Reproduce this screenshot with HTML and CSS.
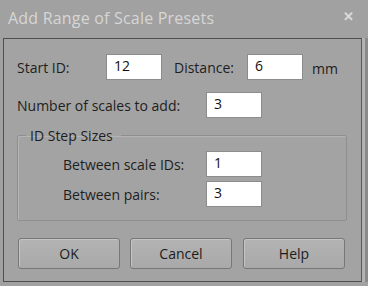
FILE: index.html
```html
<!DOCTYPE html>
<html lang="en">
<head>
    <meta charset="UTF-8">
    <title>Add Range of Scale Presets</title>
    <link rel="stylesheet" href="styles.css">
</head>
<body>
    <div class="dialog">
        <!-- title bar -->
        <div class="titlebar">
            <span class="title">Add Range of Scale Presets</span>
            <span class="close">&#x2715;</span>
        </div>

        <div class="frame">
            <div class="panel">
                <div class="row">
                    <label class="lbl lbl-start">Start ID:</label>
                    <input class="field" type="text" value="12">
                    <label class="lbl lbl-dist">Distance:</label>
                    <input class="field" type="text" value="6">
                    <span class="unit">mm</span>
                </div>

                <div class="row row-count">
                    <label class="lbl lbl-count">Number of scales to add:</label>
                    <input class="field" type="text" value="3">
                </div>

                <!-- step sizes group -->
                <fieldset class="group">
                    <legend class="legend">ID Step Sizes</legend>
                    <div class="row row-step">
                        <label class="lbl lbl-step">Between scale IDs:</label>
                        <input class="field" type="text" value="1">
                    </div>
                    <div class="row row-step row-pairs">
                        <label class="lbl lbl-step">Between pairs:</label>
                        <input class="field" type="text" value="3">
                    </div>
                </fieldset>

                <div class="buttons">
                    <button class="btn">OK</button>
                    <button class="btn">Cancel</button>
                    <button class="btn">Help</button>
                </div>
            </div>
            <div class="edge"></div>
        </div>
    </div>
</body>
</html>
```

FILE: styles.css
```css
* {
    margin: 0;
    padding: 0;
    box-sizing: border-box;
}

body {
    width: 368px;
    height: 286px;
    overflow: hidden;
    background: #a1a1a1;
    font-family: "Open Sans", "Noto Sans", sans-serif;
    color: #1c1c1c;
}

.dialog {
    width: 368px;
    height: 286px;
    display: flex;
    flex-direction: column;
    background: #a1a1a1;
}

/* 标题栏 */
.titlebar {
    height: 38px;
    display: flex;
    align-items: center;
    justify-content: space-between;
    padding: 0 14px 2px 8px;
}

.title {
    font-size: 16px;
    color: #d6d6d6;
    letter-spacing: 0.2px;
}

.close {
    font-size: 13px;
    font-weight: 700;
    color: #dcdcdc;
    margin-top: -4px;
}

.frame {
    display: flex;
    height: 244px;
    padding-left: 3px;
}

.edge {
    width: 6px;
    border-left: 3px solid #b2b2b2;
    background: #8a8a8a;
}

.panel {
    width: 359px;
    border: 1px solid #4e4e4e;
    border-right-color: #5a5a5a;
    padding: 15px 13px 0 13px;
    background: #a3a3a3;
}

.row {
    display: flex;
    align-items: center;
    height: 26px;
}

.row-count {
    margin-top: 12px;
}

.row-step {
    padding-left: 45px;
}

.row-pairs {
    margin-top: 4px;
}

.lbl {
    font-size: 14px;
    color: #1e1e1e;
}

.lbl-start {
    width: 89px;
}

.lbl-dist {
    width: 73px;
    margin-left: 12px;
}

.lbl-count {
    width: 189px;
}

.lbl-step {
    width: 143px;
}

.field {
    width: 56px;
    height: 26px;
    border: 1px solid #8c8c8c;
    background: #ffffff;
    font-family: "Open Sans", "Noto Sans", sans-serif;
    font-size: 14px;
    color: #111;
    padding: 0 0 3px 7px;
    outline: none;
}

.unit {
    margin-left: 9px;
    font-size: 14px;
    margin-top: 2px;
}

/* 分组框 */
.group {
    margin-top: 8px;
    width: 330px;
    height: 95px;
    border: 1px solid #8f8f8f;
    border-radius: 2px;
    padding: 6px 0 0 0;
    box-shadow: 1px 1px 0 #b4b4b4 inset;
}

.legend {
    margin-left: 8px;
    padding: 0 8px 0 4px;
    font-size: 14px;
    color: #1e1e1e;
}

.buttons {
    display: flex;
    gap: 10px;
    margin-top: 17px;
    margin-left: 1px;
}

.btn {
    flex-shrink: 0;
    width: 102px;
    height: 31px;
    border: 1px solid #777;
    border-radius: 3px;
    background: linear-gradient(#b3b3b3, #a9a9a9);
    box-shadow: inset 1px 1px 0 #c4c4c4;
    font-family: "Open Sans", "Noto Sans", sans-serif;
    font-size: 14px;
    color: #1c1c1c;
}

.btn:last-child {
    margin-left: 1px;
}
```
